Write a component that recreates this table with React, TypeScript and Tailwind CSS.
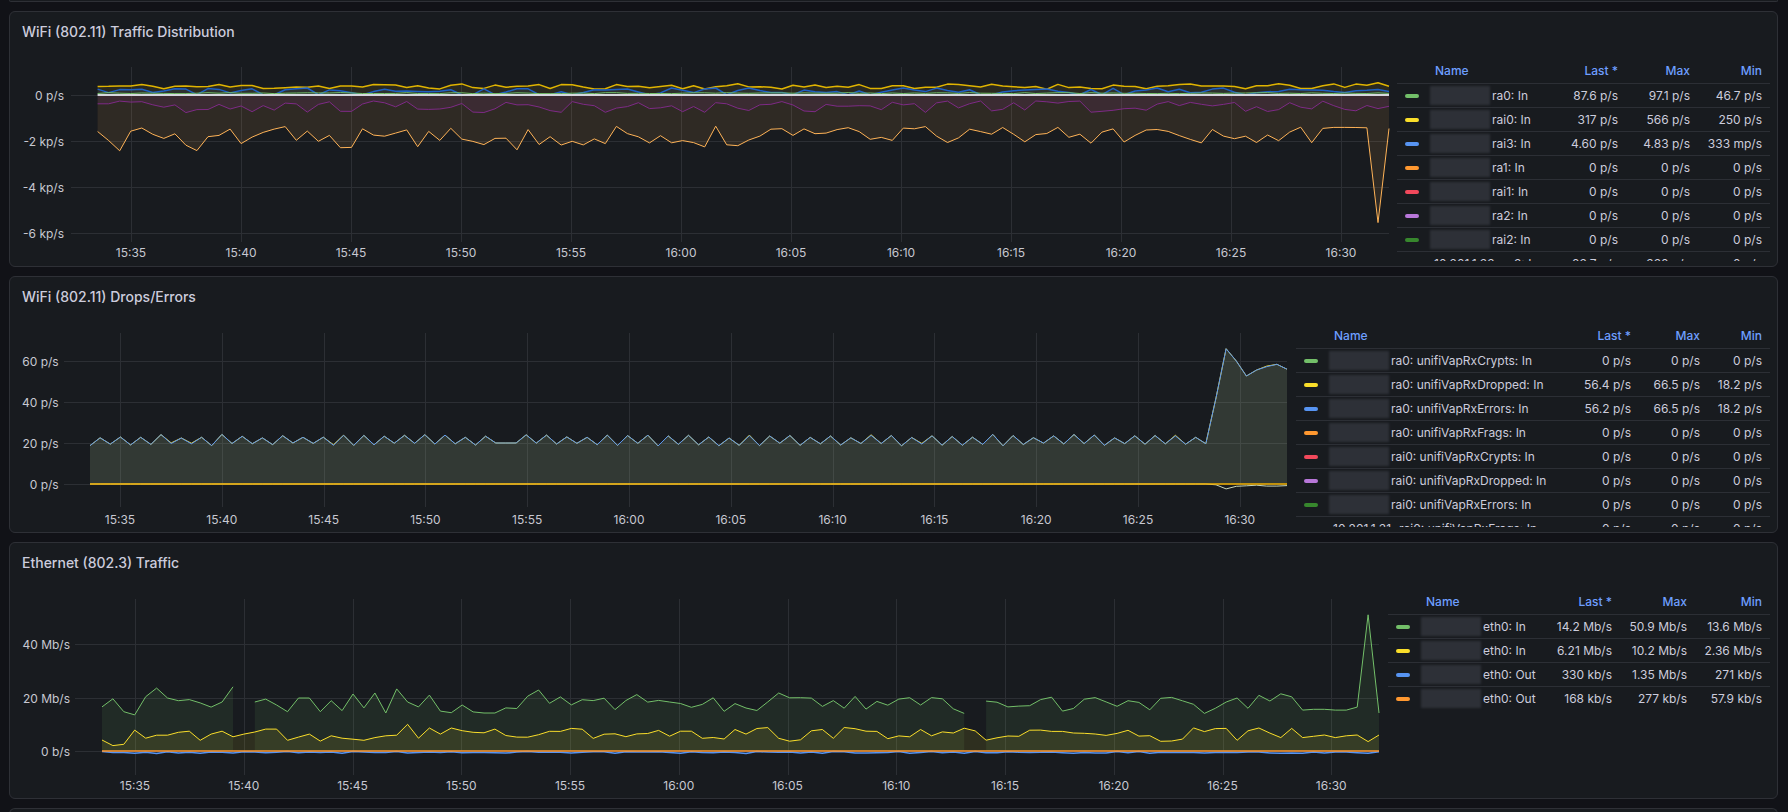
import React from "react";

type V = number | null;

const TIMES = ["15:35", "15:40", "15:45", "15:50", "15:55", "16:00", "16:05", "16:10", "16:15", "16:20", "16:25", "16:30"];

function seeded(seed: number) {
  let s = seed >>> 0;
  return () => {
    s = (s + 0x6d2b79f5) >>> 0;
    let t = s;
    t = Math.imul(t ^ (t >>> 15), t | 1);
    t ^= t + Math.imul(t ^ (t >>> 7), t | 61);
    return ((t ^ (t >>> 14)) >>> 0) / 4294967296;
  };
}

interface Line {
  color: string;
  values: V[];
  fill?: string;
  width?: number;
}

interface ChartProps {
  top: number;
  width: number;
  height: number;
  x0: number;
  x1: number;
  zeroY: number;
  toY: (v: number) => number;
  gridLeft: number;
  gridRight: number;
  yTicks: [number, string][];
  labelRight: number;
  tick0: number;
  tickStep: number;
  vTop: number;
  vBottom: number;
  labelY: number;
  lines: Line[];
}

function Chart(p: ChartProps) {
  const segments = (vals: V[]) => {
    const step = (p.x1 - p.x0) / (vals.length - 1);
    const out: [number, number][][] = [];
    let cur: [number, number][] = [];
    vals.forEach((v, i) => {
      if (v === null) {
        if (cur.length) out.push(cur);
        cur = [];
        return;
      }
      cur.push([p.x0 + i * step, p.toY(v)]);
    });
    if (cur.length) out.push(cur);
    return out;
  };
  const toD = (pts: [number, number][]) => "M" + pts.map(([x, y]) => `${x.toFixed(1)},${y.toFixed(1)}`).join("L");

  return (
    <svg width={p.width} height={p.height} className="block shrink-0">
      <g transform={`translate(-10 ${-p.top})`}>
        {p.yTicks.map(([y]) => (
          <line key={y} x1={p.gridLeft} x2={p.gridRight} y1={Math.round(y) + 0.5} y2={Math.round(y) + 0.5} stroke="#2c2f34" />
        ))}
        {TIMES.map((t, i) => {
          const x = Math.round(p.tick0 + i * p.tickStep) + 0.5;
          return <line key={t} x1={x} x2={x} y1={p.vTop} y2={p.vBottom} stroke="#2c2f34" />;
        })}
        {p.lines.map((l, li) =>
          l.fill
            ? segments(l.values).map((s, si) => (
                <path
                  key={`f${li}-${si}`}
                  d={`${toD(s)}L${s[s.length - 1][0].toFixed(1)},${p.zeroY}L${s[0][0].toFixed(1)},${p.zeroY}Z`}
                  fill={l.fill}
                />
              ))
            : null
        )}
        {p.lines.map((l, li) =>
          segments(l.values).map((s, si) => (
            <path
              key={`l${li}-${si}`}
              d={toD(s)}
              fill="none"
              stroke={l.color}
              strokeWidth={l.width ?? 1}
              strokeLinejoin="round"
            />
          ))
        )}
        {p.yTicks.map(([y, label]) => (
          <text key={label} x={p.labelRight} y={y} textAnchor="end" dominantBaseline="central" fontFamily="Inter, sans-serif" fontSize={12} fill="#c7c8d1">
            {label}
          </text>
        ))}
        {TIMES.map((t, i) => (
          <text key={t} x={p.tick0 + i * p.tickStep} y={p.labelY} textAnchor="middle" dominantBaseline="central" fontFamily="Inter, sans-serif" fontSize={12} fill="#c7c8d1">
            {t}
          </text>
        ))}
      </g>
    </svg>
  );
}

interface LegendRow {
  dot: string;
  name: string;
  last: string;
  max: string;
  min: string;
  ip?: string;
}

function Legend({ rows, cols, width, clip }: { rows: LegendRow[]; cols: string; width: string; clip: string }) {
  return (
    <div className={`${width} ${clip} shrink-0 overflow-hidden pt-[5px] text-[12px] text-[#ccccdc]`}>
      <div className={`grid ${cols} h-[24px] items-center font-medium text-[#6e9fff]`}>
        <span className="pl-[38px]">Name</span>
        <span className="text-right pr-[8px]">Last *</span>
        <span className="text-right pr-[8px]">Max</span>
        <span className="text-right pr-[8px]">Min</span>
      </div>
      {rows.map((r, i) => (
        <div key={i} className={`grid ${cols} h-[24px] items-center border-t border-[#2c2f35]`}>
          <div className="flex items-center pl-[8px] whitespace-nowrap min-w-0">
            <span className={`w-[14px] h-[4px] rounded-full shrink-0 ${r.dot}`} />
            {r.ip ? (
              <span className="ml-[15px] mr-[8px]">{r.ip}</span>
            ) : (
              <span className="ml-[11px] mr-[2px] w-[60px] h-[19px] shrink-0 bg-[#2d3037] blur-[1px]" />
            )}
            <span>{r.name}</span>
          </div>
          <span className="text-right pr-[8px] whitespace-nowrap">{r.last}</span>
          <span className="text-right pr-[8px] whitespace-nowrap">{r.max}</span>
          <span className="text-right pr-[8px] whitespace-nowrap">{r.min}</span>
        </div>
      ))}
    </div>
  );
}

function Panel({ title, height, children }: { title: string; height: string; children: React.ReactNode }) {
  return (
    <section className={`${height} shrink-0 flex flex-col rounded-[6px] border border-[#2e3036] bg-[#181b1f]`}>
      <header className="h-[42px] shrink-0 flex items-center px-[12px] pb-[3px] text-[14px] font-medium text-[#ccccdc]">{title}</header>
      <div className="flex flex-1 min-h-0 pr-[7px]">{children}</div>
    </section>
  );
}

// --- series data -------------------------------------------------------

const r1 = seeded(11);
const N1 = 118;
const p1Yellow = Array.from({ length: N1 }, (_, i) => (i > 114 ? [420, 530, 380][i - 115] : 250 + r1() * 240));
const p1Blue = Array.from({ length: N1 }, () => (r1() < 0.15 ? 15 : 90 + r1() * 220));
const p1Green = Array.from({ length: N1 }, () => 60 + r1() * 45);
const p1Purple = Array.from({ length: N1 }, () => -(260 + r1() * 520));
const p1Orange = Array.from({ length: N1 }, (_, i) => {
  if (i === 116) return -5550;
  if (i > 110) return -1400 - r1() * 80;
  return -(1350 + r1() * (i < 60 ? 1100 : 750));
});
const p1Zero = Array.from({ length: N1 }, () => 0);

const r2 = seeded(23);
const N2 = 119;
const tail2 = [42, 66, 60, 52.7, 55.6, 57.2, 58.4, 56];
const p2Blue = Array.from({ length: N2 }, (_, i) => {
  if (i >= 111) return tail2[i - 111];
  if (i >= 40 && i <= 42) return 20;
  return i % 2 === 0 ? 18.6 + r2() * 1.4 : 22.4 + r2() * 1.8;
});
const p2Yellow = p2Blue.map((v) => v + (r2() < 0.08 ? 0.3 : 0));
const p2White = Array.from({ length: N2 }, (_, i) => (i >= 111 ? [-0.4, -2.4, -1.1, -0.9, -0.6, -1, -1, -0.8][i - 111] : 0));
const p2Zero = Array.from({ length: N2 }, () => 0);

const r3 = seeded(37);
const N3 = 118;
const g3Head: V[] = [16.5, 19.5, 14.7, 13.5, 20.3, 23.5, 19.8, 18.8, 19.2, 18, 16.4, 18.3, 24, null, 18.3, 19.4, 17.2, 14.7, 19.8, 19.8, 14.7, 18.8, 15.1, 21.3, 16.1, 21.7, 14.2, 23.2, 18.3, 16.5, 20.9, 14.9, 14.3, 17.2, 14.6, 14.2, 14.2, 16.1, 15.9];
const y3Head = [4.1, 2, 2.5, 7.8, 4.8, 5.9, 5.9, 7, 7.4, 4, 6.3, 7.4, 5.3, 6.3, 7.1, 8.2, 8.2, 4, 5.2, 6.3, 3.7, 5.7, 4.8, 4.4, 4, 5, 5.7, 5.9, 10, 4.8, 8.6, 6.3, 8.6, 7.6, 7, 6.8, 8.2, 5.8, 5.2];
const g3Tail = [15.3, 15.6, 15.6, 15.3, 15.3, 16.4, 50.9, 14.2];
const y3Tail = [5, 5.5, 6, 5, 5.7, 6, 3.5, 6];
const p3Green: V[] = Array.from({ length: N3 }, (_, i) => {
  if (i < g3Head.length) return g3Head[i];
  if (i >= 110) return g3Tail[i - 110];
  if (i === 80) return null;
  const spike = r3() < 0.12 ? 4 : 0;
  return 14 + r3() * 6.5 + spike;
});
const p3Yellow = Array.from({ length: N3 }, (_, i) => {
  if (i < y3Head.length) return y3Head[i];
  if (i >= 110) return y3Tail[i - 110];
  return 3.6 + r3() * 5.2;
});
const p3Blue = Array.from({ length: N3 }, () => -(0.2 + r3() * 0.7));
const p3Orange = Array.from({ length: N3 }, () => 0.05);

// --- legends -------------------------------------------------------------

const legend1: LegendRow[] = [
  { dot: "bg-[#73bf69]", name: "ra0: In", last: "87.6 p/s", max: "97.1 p/s", min: "46.7 p/s" },
  { dot: "bg-[#fade2a]", name: "rai0: In", last: "317 p/s", max: "566 p/s", min: "250 p/s" },
  { dot: "bg-[#5794f2]", name: "rai3: In", last: "4.60 p/s", max: "4.83 p/s", min: "333 mp/s" },
  { dot: "bg-[#ff9830]", name: "ra1: In", last: "0 p/s", max: "0 p/s", min: "0 p/s" },
  { dot: "bg-[#f2495c]", name: "rai1: In", last: "0 p/s", max: "0 p/s", min: "0 p/s" },
  { dot: "bg-[#b877d9]", name: "ra2: In", last: "0 p/s", max: "0 p/s", min: "0 p/s" },
  { dot: "bg-[#37872d]", name: "rai2: In", last: "0 p/s", max: "0 p/s", min: "0 p/s" },
  { dot: "bg-[#1f60c4]", ip: "10.201.1.33", name: "ra3: In", last: "83.7 p/s", max: "330 p/s", min: "0 p/s" },
];

const legend2: LegendRow[] = [
  { dot: "bg-[#73bf69]", name: "ra0: unifiVapRxCrypts: In", last: "0 p/s", max: "0 p/s", min: "0 p/s" },
  { dot: "bg-[#fade2a]", name: "ra0: unifiVapRxDropped: In", last: "56.4 p/s", max: "66.5 p/s", min: "18.2 p/s" },
  { dot: "bg-[#5794f2]", name: "ra0: unifiVapRxErrors: In", last: "56.2 p/s", max: "66.5 p/s", min: "18.2 p/s" },
  { dot: "bg-[#ff9830]", name: "ra0: unifiVapRxFrags: In", last: "0 p/s", max: "0 p/s", min: "0 p/s" },
  { dot: "bg-[#f2495c]", name: "rai0: unifiVapRxCrypts: In", last: "0 p/s", max: "0 p/s", min: "0 p/s" },
  { dot: "bg-[#b877d9]", name: "rai0: unifiVapRxDropped: In", last: "0 p/s", max: "0 p/s", min: "0 p/s" },
  { dot: "bg-[#37872d]", name: "rai0: unifiVapRxErrors: In", last: "0 p/s", max: "0 p/s", min: "0 p/s" },
  { dot: "bg-[#1f60c4]", ip: "10.201.1.31", name: "rai0: unifiVapRxFrags: In", last: "0 p/s", max: "0 p/s", min: "0 p/s" },
];

const legend3: LegendRow[] = [
  { dot: "bg-[#73bf69]", name: "eth0: In", last: "14.2 Mb/s", max: "50.9 Mb/s", min: "13.6 Mb/s" },
  { dot: "bg-[#fade2a]", name: "eth0: In", last: "6.21 Mb/s", max: "10.2 Mb/s", min: "2.36 Mb/s" },
  { dot: "bg-[#5794f2]", name: "eth0: Out", last: "330 kb/s", max: "1.35 Mb/s", min: "271 kb/s" },
  { dot: "bg-[#ff9830]", name: "eth0: Out", last: "168 kb/s", max: "277 kb/s", min: "57.9 kb/s" },
];

export default function App() {
  return (
    <div className="h-[812px] overflow-hidden bg-[#111217] pl-[9px] pr-[10px] flex flex-col gap-[9px] font-[family-name:Inter,sans-serif]">
      <div className="h-[2px] shrink-0 rounded-b-[6px] border-x border-b border-[#2e3036] bg-[#181b1f]" />

      <Panel title="WiFi (802.11) Traffic Distribution" height="h-[256px]">
        <Chart
          top={54}
          width={1387}
          height={212}
          x0={97.6}
          x1={1389}
          zeroY={95}
          toY={(v) => 95 - v * 0.023}
          gridLeft={71}
          gridRight={1389}
          yTicks={[
            [95, "0 p/s"],
            [141, "-2 kp/s"],
            [187, "-4 kp/s"],
            [233, "-6 kp/s"],
          ]}
          labelRight={64}
          tick0={131}
          tickStep={110}
          vTop={67}
          vBottom={242}
          labelY={252}
          lines={[
            { color: "#ffb357", values: p1Orange, fill: "rgba(255,179,87,0.1)" },
            { color: "#7e2a86", values: p1Purple, fill: "rgba(134,48,140,0.14)" },
            { color: "#e0b400", values: p1Yellow, fill: "rgba(250,222,42,0.08)", width: 1.5 },
            { color: "#1f60c4", values: p1Blue, fill: "rgba(87,148,242,0.08)", width: 1.5 },
            { color: "#73bf69", values: p1Green },
            { color: "#d6d7de", values: p1Zero, width: 2 },
          ]}
        />
        <Legend rows={legend1} cols="grid-cols-[163px_66px_72px_72px]" width="w-[373px]" clip="h-[207px]" />
      </Panel>

      <Panel title="WiFi (802.11) Drops/Errors" height="h-[257px]">
        <Chart
          top={319}
          width={1286}
          height={213}
          x0={90}
          x1={1287}
          zeroY={484}
          toY={(v) => 484 - v * 2.05}
          gridLeft={64}
          gridRight={1287}
          yTicks={[
            [361, "60 p/s"],
            [402, "40 p/s"],
            [443, "20 p/s"],
            [484, "0 p/s"],
          ]}
          labelRight={58.7}
          tick0={120}
          tickStep={101.8}
          vTop={333}
          vBottom={507}
          labelY={519}
          lines={[
            { color: "#fade2a", values: p2Yellow, fill: "rgba(250,222,42,0.1)" },
            { color: "#5794f2", values: p2Blue, fill: "rgba(87,148,242,0.1)" },
            { color: "#c9d6b8", values: p2White },
            { color: "#f2b100", values: p2Zero, width: 1.5 },
          ]}
        />
        <Legend rows={legend2} cols="grid-cols-[277px_66px_69px_62px]" width="w-[474px]" clip="h-[208px]" />
      </Panel>

      <Panel title="Ethernet (802.3) Traffic" height="h-[257px]">
        <Chart
          top={585}
          width={1378}
          height={213}
          x0={102}
          x1={1379}
          zeroY={751}
          toY={(v) => 751 - v * 2.675}
          gridLeft={75}
          gridRight={1379}
          yTicks={[
            [644, "40 Mb/s"],
            [698, "20 Mb/s"],
            [751, "0 b/s"],
          ]}
          labelRight={70}
          tick0={135}
          tickStep={108.75}
          vTop={599}
          vBottom={775}
          labelY={785}
          lines={[
            { color: "#73bf69", values: p3Green, fill: "rgba(115,191,105,0.1)" },
            { color: "#fade2a", values: p3Yellow, fill: "rgba(250,222,42,0.1)" },
            { color: "#5794f2", values: p3Blue, width: 1.5 },
            { color: "#ff9830", values: p3Orange, width: 1.5 },
          ]}
        />
        <Legend rows={legend3} cols="grid-cols-[152px_80px_75px_75px]" width="w-[382px]" clip="h-[207px]" />
      </Panel>

      <div className="h-[40px] shrink-0 rounded-t-[6px] border-x border-t border-[#2e3036] bg-[#181b1f]" />
    </div>
  );
}
